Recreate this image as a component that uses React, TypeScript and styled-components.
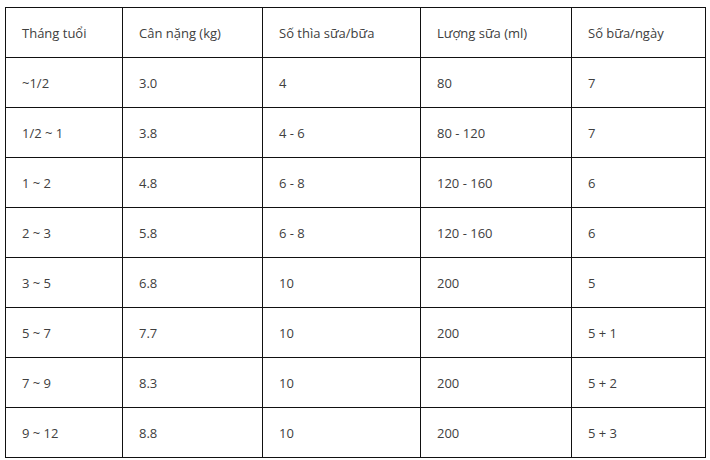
import styled, { createGlobalStyle } from 'styled-components';

const GlobalStyle = createGlobalStyle`
  body {
    margin: 0;
    background: #fff;
    font-family: 'Open Sans', 'Noto Sans', sans-serif;
  }
`;

const Page = styled.div`
  padding: 7px 0 0 5px;
`;

const Table = styled.table`
  border-collapse: collapse;
  table-layout: fixed;
  width: 700px;
  color: #404040;
  font-size: 13px;
`;

const Cell = styled.td`
  border: 1px solid #111;
  height: 49px;
  padding: 0 0 0 16px;
  text-align: left;
  vertical-align: middle;
  font-weight: 400;
`;

const widths = [117, 140, 158, 151, 134];

const header = ['Tháng tuổi', 'Cân nặng (kg)', 'Số thìa sữa/bữa', 'Lượng sữa (ml)', 'Số bữa/ngày'];

const rows = [
  ['~1/2', '3.0', '4', '80', '7'],
  ['1/2 ~ 1', '3.8', '4 - 6', '80 - 120', '7'],
  ['1 ~ 2', '4.8', '6 - 8', '120 - 160', '6'],
  ['2 ~ 3', '5.8', '6 - 8', '120 - 160', '6'],
  ['3 ~ 5', '6.8', '10', '200', '5'],
  ['5 ~ 7', '7.7', '10', '200', '5 + 1'],
  ['7 ~ 9', '8.3', '10', '200', '5 + 2'],
  ['9 ~ 12', '8.8', '10', '200', '5 + 3'],
];

const App = () => (
  <>
    <GlobalStyle />
    <Page>
      <Table>
        <colgroup>
          {widths.map((w, i) => (
            <col key={i} style={{ width: w }} />
          ))}
        </colgroup>
        <tbody>
          <tr>
            {header.map((h) => (
              <Cell key={h}>{h}</Cell>
            ))}
          </tr>
          {rows.map((r, i) => (
            <tr key={i}>
              {r.map((c, j) => (
                <Cell key={j}>{c}</Cell>
              ))}
            </tr>
          ))}
        </tbody>
      </Table>
    </Page>
  </>
);

export default App;
